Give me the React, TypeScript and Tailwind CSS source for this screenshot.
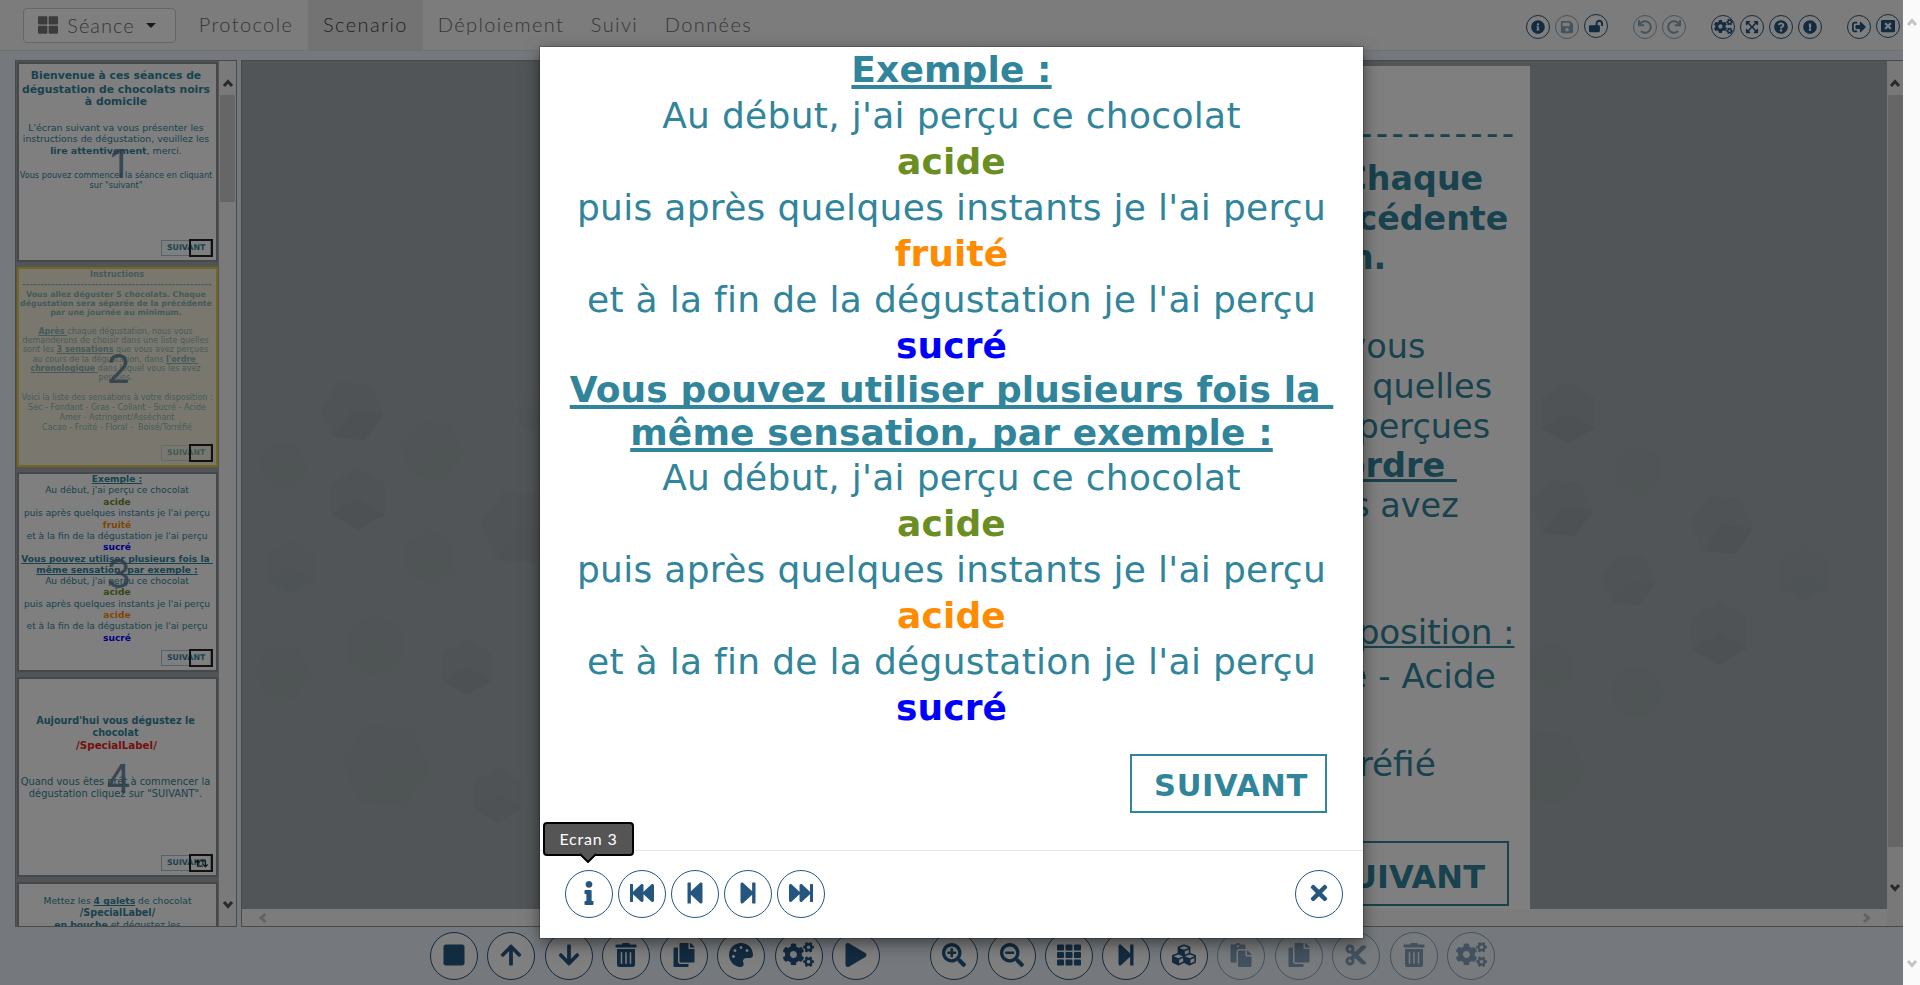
import React from "react";
import type { ReactNode } from "react";
import type { IconType } from "react-icons";
import {
  FaArrowDown, FaArrowUp, FaCogs, FaCopy, FaCubes, FaCut, FaExclamationCircle, FaExpandArrowsAlt,
  FaFastBackward, FaFastForward, FaInfo, FaInfoCircle, FaLockOpen, FaPalette, FaPaste, FaPlay,
  FaQuestionCircle, FaRedo, FaRetweet, FaSave, FaSearchMinus, FaSearchPlus, FaSignOutAlt,
  FaStepBackward, FaStepForward, FaStop, FaTh, FaThLarge, FaTimes, FaTrashAlt, FaUndo, FaWindowClose,
} from "react-icons/fa";

type Action = { icon: IconType; off?: boolean; up?: boolean };

const headerGroups: Action[][] = [
  [{ icon: FaInfoCircle }, { icon: FaSave, off: true }, { icon: FaLockOpen, up: true }],
  [{ icon: FaUndo, off: true }, { icon: FaRedo, off: true }],
  [{ icon: FaCogs }, { icon: FaExpandArrowsAlt }, { icon: FaQuestionCircle }, { icon: FaExclamationCircle }],
  [{ icon: FaSignOutAlt }, { icon: FaWindowClose, up: true }],
];

const toolGroups: Action[][] = [
  [{ icon: FaStop }, { icon: FaArrowUp }, { icon: FaArrowDown }, { icon: FaTrashAlt }, { icon: FaCopy }, { icon: FaPalette }, { icon: FaCogs }, { icon: FaPlay }],
  [
    { icon: FaSearchPlus }, { icon: FaSearchMinus }, { icon: FaTh }, { icon: FaStepForward }, { icon: FaCubes },
    { icon: FaPaste, off: true }, { icon: FaCopy, off: true }, { icon: FaCut, off: true }, { icon: FaTrashAlt, off: true }, { icon: FaCogs, off: true },
  ],
];

const navItems = [
  { label: "Protocole", cls: "w-[124px] text-[#6c6c6c]" },
  { label: "Scenario", cls: "w-[115px] bg-[#e7e7e7] text-[#444]" },
  { label: "Déploiement", cls: "w-[156px] text-[#6c6c6c]" },
  { label: "Suivi", cls: "w-[71px] text-[#6c6c6c]" },
  { label: "Données", cls: "w-[117px] text-[#6c6c6c]" },
];

function L({ className = "", children }: { className?: string; children: ReactNode }) {
  return <p className={`flex justify-center whitespace-pre ${className}`}><span>{children}</span></p>;
}

function SmallButton({ icon: Icon, off, up }: Action) {
  return (
    <button className={`flex h-6 w-6 shrink-0 items-center justify-center rounded-full border border-[#255680] bg-white text-[#255680] ${off ? "opacity-50" : ""} ${up ? "-mt-px" : ""}`}>
      <Icon className={`mb-px shrink-0 ${Icon === FaCogs ? "h-[15px] w-[19px]" : "h-[14px] w-auto"}`} />
    </button>
  );
}

function RoundButton({ icon: Icon, off }: Action) {
  return (
    <button className={`flex h-12 w-12 shrink-0 items-center justify-center rounded-full border border-[#255680] text-[#255680] ${off ? "bg-white/50 opacity-50" : "bg-white"}`}>
      <Icon className={`mb-[3px] shrink-0 ${Icon === FaCogs ? "h-[25px] w-[31px]" : "h-6 w-auto"}`} />
    </button>
  );
}

function Chevron({ dir, className = "" }: { dir: "up" | "down" | "left" | "right"; className?: string }) {
  const points = { up: "2,9 6,4.5 10,9", down: "2,4 6,8.5 10,4", left: "8.5,2 4,6 8.5,10", right: "4,2 8.5,6 4,10" }[dir];
  return (
    <svg viewBox="0 0 12 12" className={`h-3 w-3 ${className}`}>
      <polyline points={points} fill="none" stroke="currentColor" strokeWidth="3" />
    </svg>
  );
}

function Thumb({ n, selected, loop, children }: { n: number; selected?: boolean; loop?: boolean; children: ReactNode }) {
  return (
    <div className={`relative mb-[5px] h-[200px] w-[201px] shrink-0 overflow-hidden border-2 ${selected ? "border-[#e8cf3c] bg-[#f4f1dc]" : "border-[#8d9194] bg-white"}`}>
      <div className={`font-[Verdana,'DejaVu_Sans',sans-serif] text-[#31859b] ${selected ? "opacity-55" : ""}`}>{children}</div>
      <div className={`absolute right-[5px] bottom-1 flex h-4 w-[50px] items-center border border-[#a5c8d2] pl-[5px] font-[Verdana,'DejaVu_Sans',sans-serif] text-[7.8px] font-bold text-[#31859b] ${selected ? "opacity-60" : ""}`}>SUIVANT</div>
      <div className="absolute right-[3px] bottom-[3px] flex h-[18px] w-6 items-center justify-center border-2 border-[#222] text-[#222]">
        {loop && <FaRetweet className="h-[13px] w-auto" />}
      </div>
      <div className="absolute inset-x-0 top-[76px] pl-[2px] text-center font-[Inter,sans-serif] text-[40px] leading-[48px] text-[#5b7a96]/85">{n}</div>
    </div>
  );
}

const hexes = [
  [352, 411, 32, 0.02], [358, 499, 31, 0.02], [283, 465, 25, 0.008], [291, 567, 27, 0.012], [432, 450, 32, 0.008],
  [430, 557, 28, 0.01], [520, 527, 40, 0.018], [375, 645, 32, 0.008], [283, 672, 29, 0.008], [467, 667, 28, 0.02],
  [386, 765, 45, 0.01], [498, 795, 28, 0.018], [534, 412, 20, 0.012],
  [1568, 413, 31, 0.02], [1562, 508, 31, 0.02], [1639, 470, 26, 0.01], [1722, 525, 32, 0.022], [1804, 573, 28, 0.012],
  [1628, 580, 28, 0.014], [1719, 633, 32, 0.022], [1637, 692, 28, 0.01], [1552, 665, 24, 0.008], [1546, 767, 40, 0.008],
];

function Hexes() {
  return (
    <svg className="absolute inset-0 h-full w-full" viewBox="242 61 1645 848">
      {hexes.map(([x, y, r, o], i) => {
        const t = i % 2 ? 0.5 : 0.1;
        const p = Array.from({ length: 6 }, (_, k) => `${x + r * Math.cos((k + t) * Math.PI / 3)},${y + r * Math.sin((k + t) * Math.PI / 3)}`);
        return (
          <g key={i} fill="#1c3040" fillOpacity={o * 1.3}>
            <polygon points={p.join(" ")} />
            <polygon points={`${x},${y} ${p[0]} ${p[1]} ${p[2]}`} />
          </g>
        );
      })}
    </svg>
  );
}

const under = "underline [text-decoration-skip-ink:none]";
const u = `${under} decoration-1 underline-offset-1`;

function ExampleSlide({ row, first, second, underline, plain = "" }: { row: string; first: string; second: string; underline: string; plain?: string }) {
  return (
    <>
      <L className={`${row} font-bold`}><span className={underline}>Exemple :</span></L>
      <L className={`${row} ${plain}`}>Au début, j'ai perçu ce chocolat</L>
      <L className={`${row} font-bold text-[#6b8e23]`}>acide</L>
      <L className={`${row} ${plain}`}>puis après quelques instants je l'ai perçu</L>
      <L className={`${row} font-bold text-[#ff8c00]`}>fruité</L>
      <L className={`${row} ${plain}`}>et à la fin de la dégustation je l'ai perçu</L>
      <L className={`${row} font-bold text-[#0000ff]`}>sucré</L>
      <L className={`${first} font-bold`}><span className={underline}>{"Vous pouvez utiliser plusieurs fois la "}</span></L>
      <L className={`${second} font-bold`}><span className={underline}>même sensation, par exemple :</span></L>
      <L className={`${row} ${plain}`}>Au début, j'ai perçu ce chocolat</L>
      <L className={`${row} font-bold text-[#6b8e23]`}>acide</L>
      <L className={`${row} ${plain}`}>puis après quelques instants je l'ai perçu</L>
      <L className={`${row} font-bold text-[#ff8c00]`}>acide</L>
      <L className={`${row} ${plain}`}>et à la fin de la dégustation je l'ai perçu</L>
      <L className={`${row} font-bold text-[#0000ff]`}>sucré</L>
    </>
  );
}

function Header() {
  return (
    <header className="flex h-[51px] shrink-0 items-start border-b border-[#dfe3e6] bg-[#f8f8f8] font-['Century_Gothic',Lato,sans-serif] text-[20px] font-light">
      <button className="mt-2 ml-[23px] flex h-[35px] w-[153px] items-center rounded border border-[#ccc] bg-white pl-[14px] text-[#6c6c6c]">
        <FaThLarge className="mb-0.5 h-5 w-5 text-[#777]" />
        <span className="ml-2 w-[70px] pb-[2px] tracking-[1px]">Séance</span>
        <svg viewBox="0 0 10 5" className="ml-[10px] h-[5px] w-[10px]"><path d="M0 0h10l-5 5z" fill="#333" /></svg>
      </button>
      <nav className="ml-2 flex h-[50px]">
        {navItems.map((n) => (
          <a key={n.label} className={`flex items-center justify-center pb-[2px] tracking-[1.4px] ${n.cls}`}>{n.label}</a>
        ))}
      </nav>
      <div className="mt-[15px] mr-[3px] ml-auto flex gap-[25px]">
        {headerGroups.map((g, i) => (
          <div key={i} className="flex gap-[5px]">{g.map((a, j) => <SmallButton key={j} {...a} />)}</div>
        ))}
      </div>
    </header>
  );
}

function Sidebar() {
  return (
    <aside className="flex h-[867px] w-[222px] shrink-0 border border-[#8f9396] bg-[#a3aaae]">
      <div className="flex h-full w-[202px] flex-col overflow-hidden pt-px pl-px">
        <Thumb n={1}>
          <div className="pt-[5px] pr-[3px] text-[10.8px] font-bold">
            <L className="leading-[14px]">Bienvenue à ces séances de</L>
            <L className="leading-[13px]">dégustation de chocolats noirs</L>
            <L className="leading-[12px]">à domicile</L>
          </div>
          <div className="mt-[14px] pr-[3px] text-[9.4px]">
            <L className="leading-[11px]">L'écran suivant va vous présenter les</L>
            <L className="leading-[11px]">instructions de dégustation, veuillez les</L>
            <L className="leading-[13px]"><b>lire attentivement</b>, merci.</L>
          </div>
          <div className="mt-[13px] pr-[3px] text-[8.2px] leading-[10px]">
            <L>Vous pouvez commencer la séance en cliquant</L>
            <L>sur "suivant"</L>
          </div>
        </Thumb>
        <Thumb n={2} selected>
          <div className="pr-px text-[8px]">
            <L className="leading-[11px] font-bold">Instructions</L>
            <L className="mb-px leading-[9px] font-bold tracking-[0.33px]">----------------------------------------------------</L>
            <div className="pr-[2px] text-[7.9px] leading-[9.2px] font-bold">
              <L>Vous allez déguster 5 chocolats. Chaque</L>
              <L>dégustation sera séparée de la précédente</L>
              <L>par une journée au minimum.</L>
            </div>
            <div className="mt-[9px] pr-[3px] leading-[9.3px]">
              <L><b className={u}>{"Après "}</b>chaque dégustation, nous vous</L>
              <L>demanderons de choisir dans une liste quelles</L>
              <L>sont les <b className={u}>3 sensations</b> que vous avez perçues</L>
              <L>au cours de la dégustation, dans <b className={u}>{"l'ordre "}</b></L>
              <L><b className={u}>{"chronologique "}</b>dans lequel vous les avez</L>
              <L>perçues.</L>
            </div>
            <div className="mt-[11px] text-[8px] leading-[10px]">
              <L>Voici la liste des sensations à votre disposition :</L>
              <L>Sec - Fondant - Gras - Collant - Sucré - Acide</L>
              <L>Amer - Astringent/Asséchant</L>
              <L>{"Cacao - Fruité - Floral -  Boisé/Torréfié"}</L>
            </div>
          </div>
        </Thumb>
        <Thumb n={3}>
          <div className="pr-px text-[9.1px]">
            <ExampleSlide row="leading-[11.4px]" first="leading-[11px]" second="leading-[11px]" underline={u} />
          </div>
        </Thumb>
        <Thumb n={4} loop>
          <div className="mt-[36px] pr-[4px] text-[9.7px] leading-[12px] font-bold">
            <L>Aujourd'hui vous dégustez le</L>
            <L>chocolat</L>
            <L className="pl-[2px] text-[10.3px] text-[#ee1c1c]">/SpecialLabel/</L>
          </div>
          <div className="mt-[25px] pr-[4px] text-[9.9px] leading-[12px]">
            <L>Quand vous êtes prêt à commencer la</L>
            <L>dégustation cliquez sur "SUIVANT".</L>
          </div>
        </Thumb>
        <Thumb n={5}>
          <div className="mt-[11px] text-[9.2px] leading-[12px]">
            <L>Mettez les <b className={u}>4 galets</b> de chocolat</L>
            <L className="text-[9.6px] font-bold">/SpecialLabel/</L>
            <L className="leading-[11px]"><b>en bouche</b> et dégustez les</L>
          </div>
        </Thumb>
      </div>
      <div className="ml-px flex w-[17px] flex-col items-center bg-[#f5f5f5] text-[#555]">
        <Chevron dir="up" className="mt-4" />
        <div className="mt-[6px] h-[107px] w-[15px] bg-[#cdcdcd]" />
        <Chevron dir="down" className="mt-auto mb-4" />
      </div>
    </aside>
  );
}

function Stage() {
  return (
    <main className="ml-1 flex h-[867px] flex-1 border border-r-0 border-[#8f9396] bg-[#a3aaae]">
      <div className="flex flex-1 flex-col">
        <div className="relative flex h-[848px] justify-end overflow-hidden">
          <Hexes />
          <div className="relative mt-[5px] mr-[357px] h-[843px] w-[843px] bg-white font-[Verdana,'DejaVu_Sans',sans-serif] text-[34.3px] text-[#31859b]">
            <L className="leading-[45px] font-bold">Instructions</L>
            <L className="mb-[4px] leading-[44px] tracking-[3.35px]">----------------------------------------------------</L>
            <div className="pr-[10px] text-[33.3px] leading-[39.7px] font-bold">
              <L>Vous allez déguster 5 chocolats. Chaque</L>
              <L>dégustation sera séparée de la précédente</L>
              <L className="pl-[10px]">par une journée au minimum.</L>
            </div>
            <div className="mt-[49px] pr-[12px] text-[33.5px] leading-[39.7px]">
              <L>{<b className={`${under} decoration-3`}>{"Après "}</b>}chaque dégustation, nous vous</L>
              <L>demanderons de choisir dans une liste quelles</L>
              <L>sont les <b className={`${under} decoration-3`}>3 sensations</b> que vous avez perçues</L>
              <L className="pl-[13px]">au cours de la dégustation, dans <b className={`${under} decoration-3 underline-offset-2`}>{"l'ordre "}</b></L>
              <L><b className={`${under} decoration-3`}>{"chronologique "}</b>dans lequel vous les avez</L>
              <L>perçues.</L>
            </div>
            <div className="mt-[45px] leading-[44px]">
              <L className="tracking-[-0.15px]"><span className={`${under} decoration-2 underline-offset-2`}>Voici la liste des sensations à votre disposition :</span></L>
              <L className="pl-[12px]">Sec - Fondant - Gras - Collant - Sucré - Acide</L>
              <L>Amer - Astringent/Asséchant</L>
              <L className="pl-[12px]">{"Cacao - Fruité - Floral -  Boisé/Torréfié"}</L>
            </div>
            <div className="mt-[55px] mr-[21px] ml-auto flex h-[65px] w-[206px] items-center justify-center border-2 border-[#31859b] text-[32px] font-bold">
              <span className="mt-[7px] pl-px">SUIVANT</span>
            </div>
          </div>
        </div>
        <div className="flex h-[17px] items-center justify-between bg-[#f8f8f8] pr-[15px] pl-[15px] text-[#c4c4c4]">
          <Chevron dir="left" />
          <Chevron dir="right" />
        </div>
      </div>
      <div className="flex w-[16px] flex-col items-center bg-[#f0f0f0] text-[#555]">
        <Chevron dir="up" className="mt-4" />
        <div className="mt-[6px] h-[752px] w-[15px] bg-[#cdcdcd]" />
        <Chevron dir="down" className="mt-[34px]" />
      </div>
    </main>
  );
}

function Modal() {
  return (
    <section className="absolute top-[47px] left-[540px] flex h-[891px] w-[823px] flex-col bg-white shadow-[0_5px_15px_rgba(0,0,0,0.5),0_0_0_1px_rgba(0,0,0,0.2)]">
      <div className="h-[804px] border-b border-[#e5e5e5] font-[Verdana,'DejaVu_Sans',sans-serif] text-[36px] tracking-[0.12px] text-[#31859b]">
        <ExampleSlide
          row="leading-[46px]"
          first="leading-[42px]"
          second="leading-[44px]"
          underline={`${under} decoration-4 underline-offset-[3px]`}
          plain="tracking-[0.3px]"
        />
        <div className="mt-[23px] flex justify-end pr-[36px]">
          <div className="flex h-[59px] w-[197px] items-center justify-center border-2 border-[#31859b] pt-[4px] pl-[5px] text-[30.5px] tracking-[0.6px] font-bold">SUIVANT</div>
        </div>
      </div>
      <div className="mx-[25px] mt-[19px] flex gap-[5px]">
        {[FaInfo, FaFastBackward, FaStepBackward, FaStepForward, FaFastForward].map((icon, i) => <RoundButton key={i} icon={icon} />)}
        <div className="ml-auto mr-[-5px]"><RoundButton icon={FaTimes} /></div>
      </div>
      <div className="absolute top-[775px] left-[3px] flex h-[34px] w-[91px] items-center justify-center rounded border-2 border-black bg-[#555] pb-px font-['Century_Gothic',Lato,sans-serif] text-base tracking-[0.8px] text-white">
        Ecran 3
        <svg viewBox="0 0 18 10" className="absolute top-[29px] left-[34px] h-[10px] w-[18px]">
          <path d="M1 1L9 9L17 1" fill="#555" stroke="#000" strokeWidth="2" />
          <path d="M3 0h12v1H3z" fill="#555" />
        </svg>
      </div>
    </section>
  );
}

export default function App() {
  return (
    <div className="flex h-[985px] w-[1920px] overflow-hidden">
      <div className="relative flex w-[1903px] flex-col overflow-hidden bg-[#ebf3fa]">
        <Header />
        <div className="mt-[9px] flex pl-[15px]">
          <Sidebar />
          <Stage />
        </div>
        <div className="mt-[5px] ml-[430px] flex gap-[50px]">
          {toolGroups.map((g, i) => (
            <div key={i} className="flex gap-[9.45px]">{g.map((a, j) => <RoundButton key={j} {...a} />)}</div>
          ))}
        </div>
        <div className="absolute inset-0 bg-black/50" />
        <Modal />
      </div>
      <div className="flex w-[17px] flex-col items-center justify-between bg-[#fafafa] py-4 text-[#c4c4c4]">
        <Chevron dir="up" />
        <Chevron dir="down" />
      </div>
    </div>
  );
}
